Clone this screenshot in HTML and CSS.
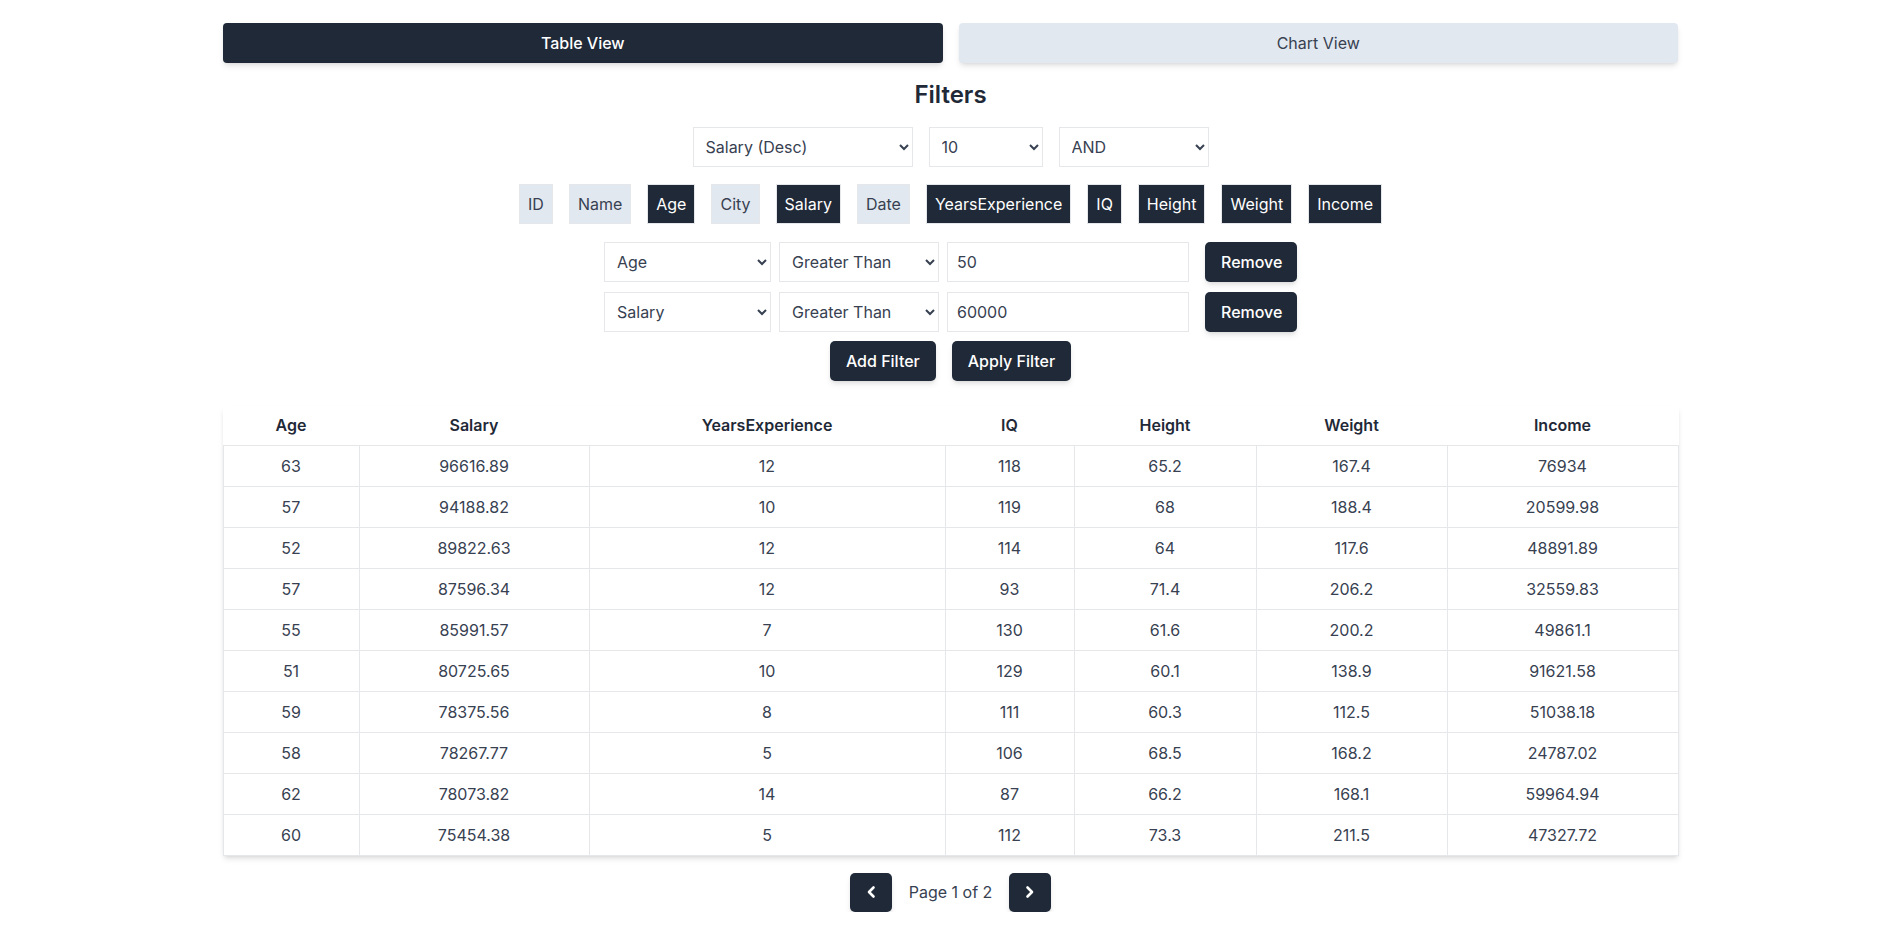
FILE: index.html
```html
<!DOCTYPE html>
<html lang="en">
<head>
<meta charset="utf-8">
<title>Data Table</title>
<link rel="stylesheet" href="styles.css">
</head>
<body>
<div class="page">
  <div class="view-tabs">
    <button class="tab tab-active">Table View</button>
    <button class="tab tab-idle">Chart View</button>
  </div>

  <h2 class="filters-title">Filters</h2>

  <div class="controls">
    <select class="sel sel-sort"><option>Salary (Desc)</option></select>
    <select class="sel sel-limit"><option>10</option></select>
    <select class="sel sel-logic"><option>AND</option></select>
  </div>

  <div class="columns">
    <button class="col-btn">ID</button>
    <button class="col-btn">Name</button>
    <button class="col-btn col-on">Age</button>
    <button class="col-btn">City</button>
    <button class="col-btn col-on">Salary</button>
    <button class="col-btn">Date</button>
    <button class="col-btn col-on">YearsExperience</button>
    <button class="col-btn col-on">IQ</button>
    <button class="col-btn col-on">Height</button>
    <button class="col-btn col-on">Weight</button>
    <button class="col-btn col-on">Income</button>
  </div>

  <div class="filter-rows">
    <div class="filter-row">
      <select class="sel sel-field"><option>Age</option></select>
      <select class="sel sel-op"><option>Greater Than</option></select>
      <input class="val" type="text" value="50">
      <button class="btn-dark btn-remove">Remove</button>
    </div>
    <div class="filter-row">
      <select class="sel sel-field"><option>Salary</option></select>
      <select class="sel sel-op"><option>Greater Than</option></select>
      <input class="val" type="text" value="60000">
      <button class="btn-dark btn-remove">Remove</button>
    </div>
  </div>

  <div class="filter-actions">
    <button class="btn-dark">Add Filter</button>
    <button class="btn-dark">Apply Filter</button>
  </div>

  <table class="data">
    <colgroup>
      <col class="c-age"><col class="c-salary"><col class="c-ye"><col class="c-iq"><col class="c-height"><col class="c-weight"><col class="c-income">
    </colgroup>
    <thead>
      <tr><th>Age</th><th>Salary</th><th>YearsExperience</th><th>IQ</th><th>Height</th><th>Weight</th><th>Income</th></tr>
    </thead>
    <tbody>
      <tr><td>63</td><td>96616.89</td><td>12</td><td>118</td><td>65.2</td><td>167.4</td><td>76934</td></tr>
      <tr><td>57</td><td>94188.82</td><td>10</td><td>119</td><td>68</td><td>188.4</td><td>20599.98</td></tr>
      <tr><td>52</td><td>89822.63</td><td>12</td><td>114</td><td>64</td><td>117.6</td><td>48891.89</td></tr>
      <tr><td>57</td><td>87596.34</td><td>12</td><td>93</td><td>71.4</td><td>206.2</td><td>32559.83</td></tr>
      <tr><td>55</td><td>85991.57</td><td>7</td><td>130</td><td>61.6</td><td>200.2</td><td>49861.1</td></tr>
      <tr><td>51</td><td>80725.65</td><td>10</td><td>129</td><td>60.1</td><td>138.9</td><td>91621.58</td></tr>
      <tr><td>59</td><td>78375.56</td><td>8</td><td>111</td><td>60.3</td><td>112.5</td><td>51038.18</td></tr>
      <tr><td>58</td><td>78267.77</td><td>5</td><td>106</td><td>68.5</td><td>168.2</td><td>24787.02</td></tr>
      <tr><td>62</td><td>78073.82</td><td>14</td><td>87</td><td>66.2</td><td>168.1</td><td>59964.94</td></tr>
      <tr><td>60</td><td>75454.38</td><td>5</td><td>112</td><td>73.3</td><td>211.5</td><td>47327.72</td></tr>
    </tbody>
  </table>

  <div class="pager">
    <button class="btn-dark pg-btn" aria-label="Previous page">
      <svg width="20" height="24" viewBox="0 0 20 24" fill="none" stroke="#ffffff" stroke-width="2.6" stroke-linecap="round" stroke-linejoin="round"><path d="M12.5 7.5 8 12l4.5 4.5"/></svg>
    </button>
    <span class="pg-text">Page 1 of 2</span>
    <button class="btn-dark pg-btn" aria-label="Next page">
      <svg width="20" height="24" viewBox="0 0 20 24" fill="none" stroke="#ffffff" stroke-width="2.6" stroke-linecap="round" stroke-linejoin="round"><path d="M7.5 7.5 12 12l-4.5 4.5"/></svg>
    </button>
  </div>
</div>
</body>
</html>
```

FILE: styles.css
```css
* { box-sizing: border-box; }

html, body {
  margin: 0;
  padding: 0;
  background: #ffffff;
}

body {
  font-family: Inter, "Noto Sans", "Liberation Sans", sans-serif;
  font-size: 16px;
  line-height: 24px;
  color: #374151;
}

button, select, input {
  font-family: inherit;
  font-size: 16px;
  line-height: 24px;
}

.page {
  width: 1455px;
  margin: 0 auto;
  padding-top: 23px;
  display: flex;
  flex-direction: column;
  align-items: center;
}

.view-tabs {
  width: 100%;
  display: flex;
  gap: 16px;
}

.tab {
  flex: 1 1 0;
  height: 40px;
  border: none;
  border-radius: 4px;
  cursor: pointer;
  box-shadow: 0 4px 6px -1px rgba(0,0,0,0.1), 0 2px 4px -2px rgba(0,0,0,0.1);
}

.tab-active {
  background: #1f2937;
  color: #ffffff;
  font-weight: 500;
}

.tab-idle {
  background: #e2e8f0;
  color: #374151;
}

.filters-title {
  margin: 16px 0 0;
  font-size: 24px;
  line-height: 32px;
  font-weight: 600;
  color: #1f2937;
}

.controls {
  margin-top: 16px;
  display: flex;
  gap: 16px;
  justify-content: center;
}

.sel {
  height: 40px;
  padding: 0 8px;
  border: 1px solid #e5e7eb;
  border-radius: 0;
  background: #ffffff;
  color: #374151;
}

.sel-sort { width: 220px; }
.sel-limit { width: 114px; }
.sel-logic { width: 150px; }

.columns {
  margin-top: 17px;
  display: flex;
  gap: 16px;
  justify-content: center;
}

.col-btn {
  height: 40px;
  padding: 0 8px;
  border: 1px solid #e5e7eb;
  background: #e2e8f0;
  color: #374151;
  cursor: pointer;
}

.col-btn.col-on {
  background: #1f2937;
  color: #ffffff;
}

.filter-rows {
  margin-top: 18px;
  display: flex;
  flex-direction: column;
  gap: 10px;
}

.filter-row {
  display: flex;
  align-items: center;
  justify-content: center;
  gap: 8px;
}

.sel-field { width: 167px; }
.sel-op { width: 160px; }

.val {
  width: 242px;
  height: 40px;
  padding: 0 9px;
  border: 1px solid #e5e7eb;
  color: #374151;
  outline: none;
}

.btn-dark {
  height: 40px;
  padding: 0 16px;
  border: none;
  border-radius: 5px;
  background: #1f2937;
  color: #ffffff;
  font-weight: 500;
  cursor: pointer;
  box-shadow: 0 4px 6px -1px rgba(0,0,0,0.1), 0 2px 4px -2px rgba(0,0,0,0.1);
}

.btn-remove {
  width: 92px;
  margin-left: 8px;
}

.filter-actions {
  margin-top: 9px;
  display: flex;
  gap: 16px;
  justify-content: center;
}

.data {
  margin-top: 25px;
  width: 100%;
  border-collapse: collapse;
  table-layout: fixed;
  background: #ffffff;
  box-shadow: 0 4px 6px -1px rgba(0,0,0,0.1), 0 2px 4px -2px rgba(0,0,0,0.1);
}

.c-age { width: 136px; }
.c-salary { width: 230px; }
.c-ye { width: 356px; }
.c-iq { width: 129px; }
.c-height { width: 182px; }
.c-weight { width: 191px; }
.c-income { width: 231px; }

.data th {
  height: 39px;
  padding: 7px 8px;
  font-weight: 600;
  color: #1f2937;
  text-align: center;
  border-bottom: 1px solid #e5e7eb;
}

.data td {
  height: 41px;
  padding: 8px;
  text-align: center;
  color: #374151;
  border: 1px solid #e5e7eb;
}

.pager {
  margin-top: 17px;
  display: flex;
  align-items: center;
  gap: 17px;
}

.pg-btn {
  width: 42px;
  height: 39px;
  padding: 0;
  display: flex;
  align-items: center;
  justify-content: center;
}

.pg-text {
  color: #374151;
}
```
